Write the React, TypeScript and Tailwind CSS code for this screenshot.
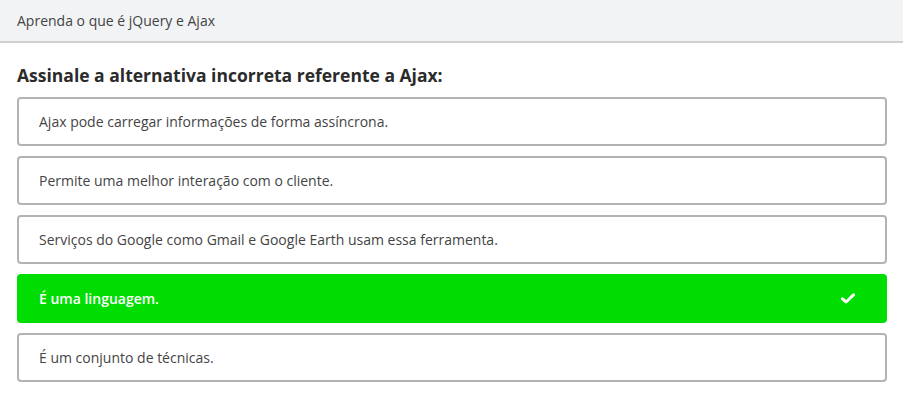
import { useState } from "react";

const options = [
  "Ajax pode carregar informações de forma assíncrona.",
  "Permite uma melhor interação com o cliente.",
  "Serviços do Google como Gmail e Google Earth usam essa ferramenta.",
  "É uma linguagem.",
  "É um conjunto de técnicas.",
];

function CheckIcon() {
  return (
    <svg width="14" height="11" viewBox="0 0 14 11" aria-hidden>
      <path d="M1.5 5.8 L5 9 L12.5 1.8" fill="none" stroke="white" strokeWidth="3" strokeLinecap="round" strokeLinejoin="round" />
    </svg>
  );
}

export default function App() {
  const [selected, setSelected] = useState(3);

  return (
    <div className="min-h-[405px] w-[903px] bg-white font-['Open_Sans',sans-serif] text-[#3d3d3d]">
      <div className="flex h-[43px] items-center border-b-2 border-[#cfd0d2] bg-[#f2f3f5] px-[17px] text-[14px] text-[#444]">
        Aprenda o que é jQuery e Ajax
      </div>
      <div className="px-[17px] pt-[20px]">
        <h1 className="text-[17.5px] font-bold leading-[24px] text-[#2b2b2b]">
          Assinale a alternativa incorreta referente a Ajax:
        </h1>
        <ul className="mt-[10px] flex flex-col gap-[10px]">
          {options.map((opt, i) => {
            const on = i === selected;
            return (
              <li key={opt}>
                <button
                  type="button"
                  onClick={() => setSelected(i)}
                  className={`flex h-[49px] w-[870px] items-center justify-between rounded-[4px] border-2 pl-[20px] pr-[30px] text-left text-[14px] ${
                    on ? "border-[#00dd00] bg-[#00dd00] font-semibold text-white" : "border-[#b3b3b3] bg-white text-[#444]"
                  }`}
                >
                  <span>{opt}</span>
                  {on ? <CheckIcon /> : null}
                </button>
              </li>
            );
          })}
        </ul>
      </div>
    </div>
  );
}
